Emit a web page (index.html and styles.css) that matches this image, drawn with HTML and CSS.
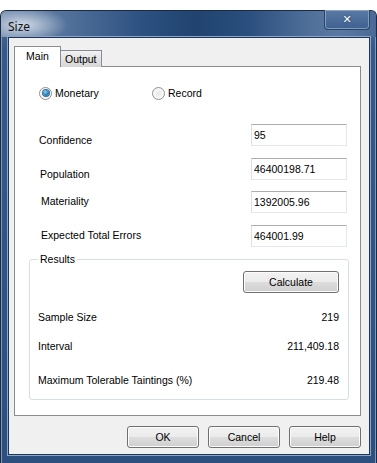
FILE: index.html
```html
<!DOCTYPE html>
<html lang="en">
<head>
    <meta charset="UTF-8">
    <title>Size</title>
    <link rel="stylesheet" href="styles.css">
</head>
<body>

    <div class="window">
        <div class="titlebar">
            <span class="title">Size</span>
            <div class="close-btn">&#x2715;</div>
        </div>

        <div class="client">
            <div class="tabs">
                <div class="tab active">Main</div>
                <div class="tab">Output</div>
            </div>

            <div class="tab-page">
                <div class="radio-row">
                    <label class="radio-item">
                        <span class="radio checked"></span>
                        Monetary
                    </label>
                    <label class="radio-item record">
                        <span class="radio"></span>
                        Record
                    </label>
                </div>

                <div class="field-row">
                    <span class="field-label low">Confidence</span>
                    <input class="textbox" type="text" value="95">
                </div>
                <div class="field-row">
                    <span class="field-label low indent1">Population</span>
                    <input class="textbox" type="text" value="46400198.71">
                </div>
                <div class="field-row">
                    <span class="field-label indent2">Materiality</span>
                    <input class="textbox" type="text" value="1392005.96">
                </div>
                <div class="field-row">
                    <span class="field-label indent2">Expected Total Errors</span>
                    <input class="textbox" type="text" value="464001.99">
                </div>

                <fieldset class="group">
                    <legend>Results</legend>
                    <div class="calc-row">
                        <button class="btn calc">Calculate</button>
                    </div>
                    <div class="result-row first">
                        <span>Sample Size</span>
                        <span>219</span>
                    </div>
                    <div class="result-row">
                        <span>Interval</span>
                        <span>211,409.18</span>
                    </div>
                    <div class="result-row last">
                        <span>Maximum Tolerable Taintings (%)</span>
                        <span>219.48</span>
                    </div>
                </fieldset>
            </div>

            <div class="dialog-buttons">
                <button class="btn">OK</button>
                <button class="btn">Cancel</button>
                <button class="btn">Help</button>
            </div>
        </div>
    </div>

</body>
</html>
```

FILE: styles.css
```css
body {
    margin: 0;
    background-color: #fff;
    font-family: "Liberation Sans", Arial, sans-serif;
    font-size: 10.5px;
    color: #000;
}

.window {
    margin-top: 10px;
    width: 377px;
    height: 453px;
    box-sizing: border-box;
    border: 1px solid #1a2b45;
    border-bottom: none;
    border-radius: 6px 6px 0 0;
    background: linear-gradient(to bottom, #4f6f98 0px, #36598a 40px, #2c4f80 100%);
    box-shadow: inset 1px 0 0 #7f98b8, inset -1px 0 0 #7f98b8;
    display: flex;
    flex-direction: column;
}

.titlebar {
    height: 26px;
    flex-shrink: 0;
    display: flex;
    align-items: flex-start;
    border-radius: 5px 5px 0 0;
    background:
        radial-gradient(ellipse 45px 18px at 22px 14px, rgba(225, 232, 242, 0.85), rgba(225, 232, 242, 0) 100%),
        linear-gradient(to right, #7189aa 0%, #51709a 18%, #2c5080 38%, #20436f 52%, #2b4f7e 66%, #4f6f99 82%, #5a79a2 90%, #4a6a95 100%);
}

.title {
    margin: 7px 0 0 7px;
    font-family: "Noto Sans", "Liberation Sans", sans-serif;
    font-size: 12px;
    color: #111;
}

.close-btn {
    margin: -1px 6px 0 auto;
    width: 44px;
    height: 19px;
    border: 1px solid #2a4468;
    border-top: none;
    border-radius: 0 0 4px 4px;
    box-shadow: inset 0 0 0 1px rgba(170, 190, 215, 0.6);
    background: linear-gradient(to bottom, #5a7aa4, #3f6190);
    color: #fff;
    font-family: "DejaVu Sans", sans-serif;
    font-weight: bold;
    font-size: 11px;
    text-align: center;
    line-height: 19px;
    text-shadow: 0 0 2px #1c3558;
}

.client {
    margin: 0 6px 8px 7px;
    flex: 1;
    background-color: #f0f0f0;
    border: 1px solid #1d355a;
    box-shadow: 0 0 0 1px #8da5c4;
    padding: 9px 8px 0 5px;
}

.tabs {
    display: flex;
    align-items: flex-end;
    height: 20px;
    margin-bottom: -1px;
    position: relative;
    z-index: 1;
}

.tab {
    height: 16px;
    padding: 0 4px;
    border: 1px solid #898c95;
    border-bottom: none;
    border-left: none;
    background: linear-gradient(to bottom, #f2f2f2, #e3e3e3 50%, #d6d6d6);
    line-height: 17px;
}

.tab.active {
    height: 20px;
    width: 37px;
    padding: 0 4px;
    border-left: 1px solid #898c95;
    background: #fff;
    line-height: 18px;
    text-align: center;
}

.tab-page {
    height: 350px;
    box-sizing: border-box;
    background-color: #fff;
    border: 1px solid #898c95;
    padding: 20px 12px 0 24px;
}

.radio-row {
    display: flex;
    height: 12px;
    align-items: center;
    margin-bottom: 25px;
}

.radio-item {
    display: flex;
    align-items: center;
    gap: 3px;
    width: 113px;
}

.radio {
    width: 11px;
    height: 11px;
    border: 1px solid #8e8f8f;
    border-radius: 50%;
    background: radial-gradient(circle at 50% 50%, #e8e8e8, #fafafa 70%);
    display: flex;
    align-items: center;
    justify-content: center;
}

.radio.checked::after {
    content: "";
    width: 6px;
    height: 6px;
    border-radius: 50%;
    background: radial-gradient(circle at 40% 35%, #8ad6f7, #2a83c0 50%, #0f4a7c);
    box-shadow: 0 0 0 1px #3a6e98;
}

.field-row {
    display: flex;
    align-items: flex-start;
    height: 22px;
    margin-bottom: 12px;
}

.field-row:nth-child(3) {
    margin-bottom: 11px;
}

.field-label {
    width: 212px;
    padding-top: 4px;
}

.field-label.low {
    padding-top: 10px;
}

.field-label.indent1 {
    padding-left: 1px;
    width: 211px;
}

.field-label.indent2 {
    padding-left: 2px;
    width: 210px;
}

.textbox {
    width: 96px;
    height: 22px;
    box-sizing: border-box;
    margin: 0;
    padding: 0 2px;
    border: 1px solid #e2e7ee;
    border-top-color: #abadb3;
    border-left-color: #dbdfe6;
    font-family: inherit;
    font-size: 10.5px;
    color: #000;
    outline: none;
}

.group {
    margin: -6px 0 0 -10px;
    width: 320px;
    height: 147px;
    box-sizing: border-box;
    border: 1px solid #d5dfe5;
    border-radius: 3px;
    padding: 0 9px 0 8px;
}

.group legend {
    margin-left: 0;
    padding: 0 2px;
    line-height: 12px;
}

.calc-row {
    display: flex;
    justify-content: flex-end;
    margin-top: 6px;
}

.btn {
    height: 22px;
    box-sizing: border-box;
    border: 1px solid #707070;
    border-radius: 3px;
    box-shadow: inset 0 0 0 1px #fcfcfc;
    background: linear-gradient(to bottom, #f2f2f2 0%, #ebebeb 50%, #dddddd 51%, #cfcfcf 100%);
    font-family: inherit;
    font-size: 10.5px;
    color: #000;
    padding: 0;
}

.btn.calc {
    width: 96px;
}

.result-row {
    display: flex;
    justify-content: space-between;
    height: 14px;
    line-height: 14px;
    margin-top: 15px;
}

.result-row.first {
    margin-top: 17px;
}

.result-row.last {
    margin-top: 20px;
}

.dialog-buttons {
    display: flex;
    justify-content: flex-end;
    gap: 9px;
    margin-top: 10px;
}

.dialog-buttons .btn {
    width: 72px;
}
```
